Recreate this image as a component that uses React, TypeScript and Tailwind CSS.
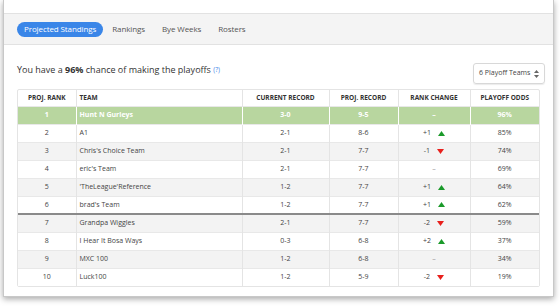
import { useState } from "react";

interface Row {
    rank: number;
    team: string;
    current: string;
    proj: string;
    change: number;
    odds: string;
}

const rows: Row[] = [
    { rank: 1, team: "Hunt N Gurleys", current: "3-0", proj: "9-5", change: 0, odds: "96%" },
    { rank: 2, team: "A1", current: "2-1", proj: "8-6", change: 1, odds: "85%" },
    { rank: 3, team: "Chris's Choice Team", current: "2-1", proj: "7-7", change: -1, odds: "74%" },
    { rank: 4, team: "eric's Team", current: "2-1", proj: "7-7", change: 0, odds: "69%" },
    { rank: 5, team: "'TheLeague'Reference", current: "1-2", proj: "7-7", change: 1, odds: "64%" },
    { rank: 6, team: "brad's Team", current: "1-2", proj: "7-7", change: 1, odds: "62%" },
    { rank: 7, team: "Grandpa Wiggles", current: "2-1", proj: "7-7", change: -2, odds: "59%" },
    { rank: 8, team: "I Hear It Bosa Ways", current: "0-3", proj: "6-8", change: 2, odds: "37%" },
    { rank: 9, team: "MXC 100", current: "1-2", proj: "6-8", change: 0, odds: "34%" },
    { rank: 10, team: "Luck100", current: "1-2", proj: "5-9", change: -2, odds: "19%" },
];

const tabs = ["Projected Standings", "Rankings", "Bye Weeks", "Rosters"];

function RankChange({ value, highlight }: { value: number; highlight: boolean }) {
    if (value === 0) {
        return <span className={highlight ? "text-white" : "text-[#999]"}>–</span>;
    }
    const up = value > 0;
    return (
        <span className="inline-flex items-center gap-[7px]">
            <span>{up ? `+${value}` : value}</span>
            {up ? (
                <svg width="7" height="5" viewBox="0 0 7 5"><path d="M0 5 L3.5 0 L7 5 Z" fill="#1a9a2a" /></svg>
            ) : (
                <svg width="7" height="5" viewBox="0 0 7 5"><path d="M0 0 L7 0 L3.5 5 Z" fill="#e8201c" /></svg>
            )}
        </span>
    );
}

export default function App() {
    const [active, setActive] = useState(0);

    return (
        <div className="w-[560px] h-[306px] bg-white overflow-hidden font-['Open_Sans',sans-serif] text-[#333]">
            <div className="ml-[3px] w-[551px] h-[297px] bg-white border-x border-b border-[#c8c8c8] shadow-[0_2px_6px_rgba(0,0,0,0.35)]">
                {/* Top strip */}
                <div className="h-[13px]" />

                {/* Tabs */}
                <div className="h-[32px] bg-[#f4f4f4] border-y border-[#e2e2e2] flex items-center gap-[1px] px-[13px]">
                    {tabs.map((tab, i) => (
                        <button
                            key={tab}
                            onClick={() => setActive(i)}
                            className={`h-[15px] rounded-full text-[8px] leading-none tracking-[-0.1px] ${
                                i === active ? "bg-[#3a86e8] text-white px-[7px]" : "text-[#555] px-[8px]"
                            }`}
                        >
                            {tab}
                        </button>
                    ))}
                </div>

                {/* Headline */}
                <div className="flex items-center justify-between pl-[13px] pr-[8px] pt-[18px] pb-[5px]">
                    <p className="text-[9px] text-[#333] leading-none mb-[8px]">
                        You have a <b className="font-bold">96%</b> chance of making the playoffs{" "}
                        <span className="text-[6.5px] text-[#3a86e8] align-middle">(?)</span>
                    </p>
                    <div className="w-[72px] h-[21px] border border-[#d8d8d8] rounded-[3px] shadow-[0_1px_1px_rgba(0,0,0,0.08)] flex items-center justify-between px-[5px] text-[7px] text-[#444]">
                        <span>6 Playoff Teams</span>
                        <svg width="5" height="8" viewBox="0 0 5 8">
                            <path d="M0 3 L2.5 0 L5 3 Z" fill="#666" />
                            <path d="M0 5 L5 5 L2.5 8 Z" fill="#666" />
                        </svg>
                    </div>
                </div>

                {/* Table */}
                <div className="mx-[13px] border border-[#e4e4e4] rounded-[2px]">
                    <table className="w-full border-collapse text-[7px] text-center">
                        <thead>
                            <tr className="h-[16px] text-[6.5px] font-bold text-[#333] uppercase">
                                <th className="w-[58px] border-r border-[#e4e4e4] font-bold">Proj. Rank</th>
                                <th className="w-[166px] border-r border-[#e4e4e4] text-left pl-[3px] font-bold">Team</th>
                                <th className="w-[87px] border-r border-[#e4e4e4] font-bold">Current Record</th>
                                <th className="w-[69px] border-r border-[#e4e4e4] font-bold">Proj. Record</th>
                                <th className="w-[72px] border-r border-[#e4e4e4] font-bold">Rank Change</th>
                                <th className="font-bold">Playoff Odds</th>
                            </tr>
                        </thead>
                        <tbody>
                            {rows.map((row, i) => {
                                const highlight = row.rank === 1;
                                const bg = highlight ? "bg-[#b8d69f] text-white font-bold" : i % 2 === 0 ? "bg-[#f3f3f3]" : "bg-white";
                                const cut = row.rank === 7 ? "border-t-2 border-t-[#8a8a8a]" : "border-t border-t-[#e8e8e8]";
                                const cell = highlight ? "border-r border-white" : "border-r border-[#e4e4e4]";
                                return (
                                    <tr key={row.rank} className={`h-[18px] ${bg} ${cut} ${highlight ? "" : "text-[#444]"}`}>
                                        <td className={cell}>{row.rank}</td>
                                        <td className={`${cell} text-left pl-[3px]`}>{row.team}</td>
                                        <td className={cell}>{row.current}</td>
                                        <td className={cell}>{row.proj}</td>
                                        <td className={cell}>
                                            <RankChange value={row.change} highlight={highlight} />
                                        </td>
                                        <td>{row.odds}</td>
                                    </tr>
                                );
                            })}
                        </tbody>
                    </table>
                </div>
            </div>
        </div>
    );
}
